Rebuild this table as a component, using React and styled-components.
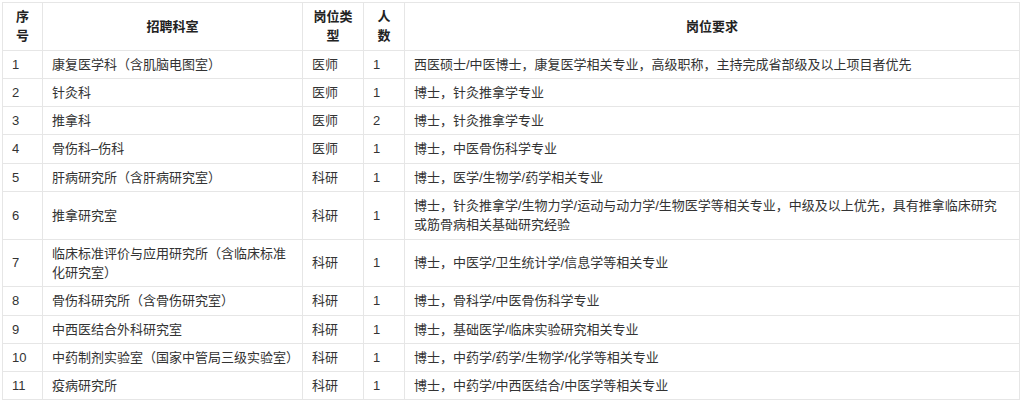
import styled, { createGlobalStyle } from 'styled-components'

const GlobalStyle = createGlobalStyle`
  body {
    margin: 0;
    background: #fff;
    font-family: "Liberation Sans", "Noto Sans CJK SC", sans-serif;
  }
`

const Wrapper = styled.div`
  padding: 2px;
`

const Table = styled.table`
  width: 1018px;
  border-collapse: collapse;
  table-layout: fixed;
  font-size: 13px;
  line-height: 19.3px;
  color: #333;
`

const HeadCell = styled.th`
  border: 1px solid #e6e6e6;
  padding: 4px 9px;
  font-weight: bold;
  text-align: center;
  vertical-align: middle;
  color: #222;
`

const Cell = styled.td`
  border: 1px solid #e6e6e6;
  padding: 4px ${(p) => (p.$last ? '14px' : '9px')} 4px 9px;
  text-align: left;
  vertical-align: middle;
`

const rows = [
  ['1', '康复医学科（含肌脑电图室）', '医师', '1', '西医硕士/中医博士，康复医学相关专业，高级职称，主持完成省部级及以上项目者优先'],
  ['2', '针灸科', '医师', '1', '博士，针灸推拿学专业'],
  ['3', '推拿科', '医师', '2', '博士，针灸推拿学专业'],
  ['4', '骨伤科–伤科', '医师', '1', '博士，中医骨伤科学专业'],
  ['5', '肝病研究所（含肝病研究室）', '科研', '1', '博士，医学/生物学/药学相关专业'],
  ['6', '推拿研究室', '科研', '1', '博士，针灸推拿学/生物力学/运动与动力学/生物医学等相关专业，中级及以上优先，具有推拿临床研究或筋骨病相关基础研究经验'],
  ['7', '临床标准评价与应用研究所（含临床标准化研究室）', '科研', '1', '博士，中医学/卫生统计学/信息学等相关专业'],
  ['8', '骨伤科研究所（含骨伤研究室）', '科研', '1', '博士，骨科学/中医骨伤科学专业'],
  ['9', '中西医结合外科研究室', '科研', '1', '博士，基础医学/临床实验研究相关专业'],
  ['10', '中药制剂实验室（国家中管局三级实验室）', '科研', '1', '博士，中药学/药学/生物学/化学等相关专业'],
  ['11', '疫病研究所', '科研', '1', '博士，中药学/中西医结合/中医学等相关专业'],
]

export default function App() {
  return (
    <Wrapper>
      <GlobalStyle />
      <Table>
        <colgroup>
          <col style={{ width: 40 }} />
          <col style={{ width: 260 }} />
          <col style={{ width: 61 }} />
          <col style={{ width: 41 }} />
          <col />
        </colgroup>
        <thead>
          <tr>
            <HeadCell>序号</HeadCell>
            <HeadCell>招聘科室</HeadCell>
            <HeadCell>岗位类型</HeadCell>
            <HeadCell>人数</HeadCell>
            <HeadCell>岗位要求</HeadCell>
          </tr>
        </thead>
        <tbody>
          {rows.map((r) => (
            <tr key={r[0]}>
              {r.map((c, i) => (
                <Cell key={i} $last={i === r.length - 1}>
                  {c}
                </Cell>
              ))}
            </tr>
          ))}
        </tbody>
      </Table>
    </Wrapper>
  )
}
